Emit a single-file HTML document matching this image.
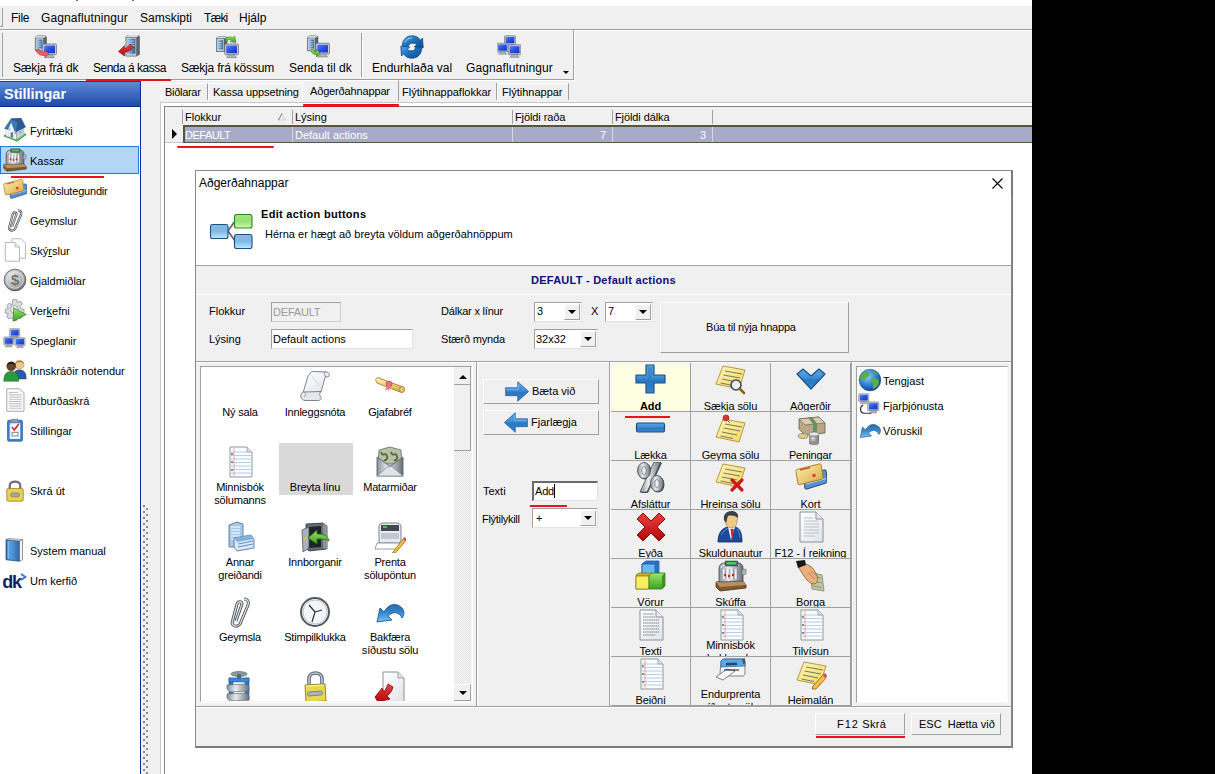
<!DOCTYPE html>
<html><head><meta charset="utf-8">
<style>
*{box-sizing:border-box;margin:0;padding:0}
html,body{width:1215px;height:774px;overflow:hidden;background:#fff;font-family:"Liberation Sans",sans-serif;color:#000}
.a{position:absolute}
.t{position:absolute;white-space:nowrap;font-size:11px;line-height:14px}
.t12{position:absolute;white-space:nowrap;font-size:12px;line-height:14px}
.b{position:absolute;border:1px solid #adadad;background:#e5e5e5}
</style></head><body>
<!-- black right -->
<div class="a" style="left:1032px;top:0;width:183px;height:774px;background:#000"></div>
<div class="a" style="left:76px;top:0;width:2px;height:1px;background:#707080"></div><div class="a" style="left:132px;top:0;width:2px;height:1px;background:#707080"></div>
<!-- top gray area -->
<div class="a" style="left:0;top:6px;width:1032px;height:96px;background:#f0f0f0"></div>
<!-- menu -->
<div class="a" style="left:0;top:29px;width:1032px;height:1px;background:#a0a0a0"></div>
<div class="a" style="left:0;top:30px;width:1032px;height:1px;background:#fff"></div>
<div class="a" style="left:2px;top:8px;width:1px;height:19px;background:#a0a0a0"></div>
<div class="a" style="left:0;top:26px;width:3px;height:1px;background:#a0a0a0"></div>
<div class="t12" style="left:11px;top:11px;letter-spacing:-0.3px">File</div>
<div class="t12" style="left:41px;top:11px;letter-spacing:0.1px">Gagnaflutningur</div>
<div class="t12" style="left:140px;top:11px">Samskipti</div>
<div class="t12" style="left:204px;top:11px;letter-spacing:-0.8px">Tæki</div>
<div class="t12" style="left:239px;top:11px">Hjálp</div>
<!-- toolbar -->
<div class="a" style="left:2px;top:33px;width:1px;height:44px;background:#a0a0a0"></div>
<div class="a" style="left:0;top:79px;width:574px;height:1px;background:#a0a0a0"></div><div class="a" style="left:0;top:80px;width:575px;height:1px;background:#fff"></div>
<div class="a" style="left:573px;top:30px;width:1px;height:50px;background:#a0a0a0"></div><div class="a" style="left:574px;top:30px;width:1px;height:51px;background:#fff"></div>
<div class="a" style="left:361px;top:33px;width:1px;height:44px;background:#a0a0a0"></div>
<div class="a" style="left:362px;top:33px;width:1px;height:44px;background:#fff"></div>
<div class="t12" style="left:13px;top:61px;letter-spacing:-0.18px">Sækja frá dk</div>
<div class="t12" style="left:93px;top:61px;letter-spacing:-0.5px">Senda á kassa</div>
<div class="t12" style="left:181px;top:61px;letter-spacing:-0.19px">Sækja frá kössum</div>
<div class="t12" style="left:289px;top:61px">Senda til dk</div>
<div class="t12" style="left:372px;top:61px">Endurhlaða val</div>
<div class="t12" style="left:466px;top:61px;letter-spacing:0.1px">Gagnaflutningur</div>
<div class="a" style="left:563px;top:71px;width:0;height:0;border-left:3px solid transparent;border-right:3px solid transparent;border-top:3px solid #000"></div>
<div class="a" style="left:86px;top:79px;width:85px;height:2px;background:#e8141c"></div>
<svg width="0" height="0" style="position:absolute">
<defs>
<linearGradient id="gBlue" x1="0" y1="0" x2="0" y2="1"><stop offset="0" stop-color="#2a6aa8"/><stop offset="0.5" stop-color="#3a8ad0"/><stop offset="1" stop-color="#7cc4f4"/></linearGradient>
<linearGradient id="gBlueH" x1="0" y1="0" x2="0" y2="1"><stop offset="0" stop-color="#5aa6e0"/><stop offset="0.45" stop-color="#3d8fd6"/><stop offset="0.55" stop-color="#2a78c0"/><stop offset="1" stop-color="#3a8ad0"/></linearGradient>
<linearGradient id="gBlueD" x1="0" y1="0" x2="1" y2="1"><stop offset="0" stop-color="#4aa8e8"/><stop offset="0.5" stop-color="#1a70c0"/><stop offset="1" stop-color="#0a4a90"/></linearGradient>
<linearGradient id="gBookC" x1="0" y1="0" x2="1" y2="0"><stop offset="0" stop-color="#2a70b8"/><stop offset=".3" stop-color="#5aa0e0"/><stop offset="1" stop-color="#2a68b0"/></linearGradient>
<linearGradient id="gHdrB" x1="0" y1="0" x2="0" y2="1"><stop offset="0" stop-color="#8ab8e0"/><stop offset=".5" stop-color="#80b8e8"/><stop offset="1" stop-color="#c0ecfc"/></linearGradient>
<linearGradient id="gHdrG" x1="0" y1="0" x2="0" y2="1"><stop offset="0" stop-color="#a8e088"/><stop offset=".5" stop-color="#98e070"/><stop offset="1" stop-color="#d0f8b8"/></linearGradient>
<linearGradient id="gNote" x1="0" y1="0" x2="1" y2="1"><stop offset="0" stop-color="#fff6b8"/><stop offset="1" stop-color="#f0d860"/></linearGradient>
<linearGradient id="gPage" x1="0" y1="0" x2="1" y2="1"><stop offset="0" stop-color="#ffffff"/><stop offset="1" stop-color="#dfe4ea"/></linearGradient>
<linearGradient id="gRed" x1="0" y1="0" x2="0" y2="1"><stop offset="0" stop-color="#f04040"/><stop offset="1" stop-color="#b00808"/></linearGradient>
<linearGradient id="gGreen" x1="0" y1="0" x2="0" y2="1"><stop offset="0" stop-color="#9ae86a"/><stop offset="1" stop-color="#3aa020"/></linearGradient>
<linearGradient id="gSilver" x1="0" y1="0" x2="1" y2="0"><stop offset="0" stop-color="#8a9098"/><stop offset="0.4" stop-color="#e8ecf0"/><stop offset="1" stop-color="#6a7078"/></linearGradient>
<linearGradient id="gScreen" x1="0" y1="0" x2="1" y2="1"><stop offset="0" stop-color="#5080f8"/><stop offset="0.5" stop-color="#2a50e8"/><stop offset="1" stop-color="#1030c0"/></linearGradient>
<linearGradient id="gServer" x1="0" y1="0" x2="1" y2="0"><stop offset="0" stop-color="#a8c8e8"/><stop offset="0.6" stop-color="#4a88c8"/><stop offset="1" stop-color="#4a5868"/></linearGradient>
<linearGradient id="gGold" x1="0" y1="0" x2="1" y2="1"><stop offset="0" stop-color="#fff0b0"/><stop offset="1" stop-color="#d8a840"/></linearGradient>
<radialGradient id="gGlobe" cx="0.4" cy="0.35" r="0.7"><stop offset="0" stop-color="#8ad0ff"/><stop offset="0.6" stop-color="#2a78d0"/><stop offset="1" stop-color="#103a90"/></radialGradient>
<radialGradient id="gCoin" cx="0.4" cy="0.35" r="0.7"><stop offset="0" stop-color="#f4f4f4"/><stop offset="0.7" stop-color="#a8a8a8"/><stop offset="1" stop-color="#606060"/></radialGradient>
</defs></svg><svg class="a" style="left:33px;top:35px" width="24" height="24" viewBox="0 0 32 32"><path d="M3 4 C3 2 5 1 7 1 L15 1 C17 1 18 2 18 4 L18 19 L14 21 L3 21 Z" fill="#5a6470" stroke="#3a4450" stroke-width=".6"/>
<path d="M3 4 C3 2 5 1 7 1 L15 1 C17 1 18 2 14 4 Z" fill="#d8dce0"/>
<rect x="3" y="4" width="11" height="17" fill="#c8ccd4" stroke="#4a5460" stroke-width=".6"/>
<rect x="4.5" y="6" width="8" height="12" fill="url(#gServer)"/>
<path d="M5.5 9 h6 M5.5 12 h6 M5.5 15 h6" stroke="#d8ecff" stroke-width=".8"/><g transform="translate(13,12) scale(1.3)"><rect x="0" y="0" width="14" height="11" rx="1" fill="#d0d4d8" stroke="#606870" stroke-width=".8"/>
<rect x="1.5" y="1.5" width="11" height="8" fill="url(#gScreen)"/>
<path d="M4 11 L10 11 L12 14 L2 14 Z" fill="#b0b4b8" stroke="#707880" stroke-width=".6"/></g><path d="M5 19 L11 24 L11 21 L18 21 L18 27 L11 27 L11 24" fill="none"/><path d="M4 20 C6 26 10 28 16 27 L16 30 L21 25 L16 20 L16 23 C12 23 9 22 8 19 Z" fill="#f06060" stroke="#a02020" stroke-width=".7"/></svg><svg class="a" style="left:117px;top:35px" width="24" height="24" viewBox="0 0 32 32"><path d="M12 3 C12 1 14 0 16 0 L27 0 C29 0 30 1 30 3 L30 26 L26 28 L12 28 Z" fill="#5a6470" stroke="#3a4450" stroke-width=".6"/>
<path d="M12 3 C12 1 14 0 16 0 L27 0 C29 0 30 1 26 3 Z" fill="#d8dce0"/>
<rect x="12" y="3" width="14" height="25" fill="#c8ccd4" stroke="#4a5460" stroke-width=".6"/>
<rect x="13.5" y="5" width="11" height="20" fill="url(#gServer)"/>
<path d="M14.5 8 h9 M14.5 11 h9 M14.5 14 h9" stroke="#d8ecff" stroke-width=".8"/><path d="M2 22 L10 14 L10 18 C14 17 16 14 17 12 L22 16 C19 20 15 23 10 23 L10 28 Z" fill="url(#gRed)" stroke="#800808" stroke-width=".7"/></svg><svg class="a" style="left:215px;top:35px" width="24" height="24" viewBox="0 0 32 32"><path d="M2 5 C2 3 4 2 6 2 L13 2 C15 2 16 3 16 5 L16 20 L12 22 L2 22 Z" fill="#5a6470" stroke="#3a4450" stroke-width=".6"/>
<path d="M2 5 C2 3 4 2 6 2 L13 2 C15 2 16 3 12 5 Z" fill="#d8dce0"/>
<rect x="2" y="5" width="10" height="17" fill="#c8ccd4" stroke="#4a5460" stroke-width=".6"/>
<rect x="3.5" y="7" width="7" height="12" fill="url(#gServer)"/>
<path d="M4.5 10 h5 M4.5 13 h5 M4.5 16 h5" stroke="#d8ecff" stroke-width=".8"/><g transform="translate(13,12) scale(1.3)"><rect x="0" y="0" width="14" height="11" rx="1" fill="#d0d4d8" stroke="#606870" stroke-width=".8"/>
<rect x="1.5" y="1.5" width="11" height="8" fill="url(#gScreen)"/>
<path d="M4 11 L10 11 L12 14 L2 14 Z" fill="#b0b4b8" stroke="#707880" stroke-width=".6"/></g><path d="M14 8 C14 2 20 1 24 4 L26 1 L28 10 L20 9 L22 7 C20 5 17 6 16 9 Z" fill="url(#gGreen)" stroke="#2a7010" stroke-width=".6"/></svg><svg class="a" style="left:306px;top:35px" width="24" height="24" viewBox="0 0 32 32"><path d="M2 4 C2 2 4 1 6 1 L13 1 C15 1 16 2 16 4 L16 19 L12 21 L2 21 Z" fill="#5a6470" stroke="#3a4450" stroke-width=".6"/>
<path d="M2 4 C2 2 4 1 6 1 L13 1 C15 1 16 2 12 4 Z" fill="#d8dce0"/>
<rect x="2" y="4" width="10" height="17" fill="#c8ccd4" stroke="#4a5460" stroke-width=".6"/>
<rect x="3.5" y="6" width="7" height="12" fill="url(#gServer)"/>
<path d="M4.5 9 h5 M4.5 12 h5 M4.5 15 h5" stroke="#d8ecff" stroke-width=".8"/><g transform="translate(13,11) scale(1.3)"><rect x="0" y="0" width="14" height="11" rx="1" fill="#d0d4d8" stroke="#606870" stroke-width=".8"/>
<rect x="1.5" y="1.5" width="11" height="8" fill="url(#gScreen)"/>
<path d="M4 11 L10 11 L12 14 L2 14 Z" fill="#b0b4b8" stroke="#707880" stroke-width=".6"/></g><path d="M6 20 C7 24 10 26 14 26 L14 29 L19 24 L14 19 L14 22 C11 22 10 21 9 19 Z" fill="url(#gGreen)" stroke="#2a7010" stroke-width=".7"/></svg><svg class="a" style="left:400px;top:35px" width="24" height="24" viewBox="0 0 32 32"><path d="M3 15 C3 6 9 1 16 1 C21 1 25 3 27 7 L30 4 L31 17 L19 16 L22 13 C21 11 19 11 16 11 C13 11 11.5 13 11.5 15 Z" fill="url(#gBlueD)" stroke="#0c3a70" stroke-width=".9" stroke-linejoin="round"/>
<path d="M29 17 C29 26 23 31 16 31 C11 31 7 29 5 25 L2 28 L1 15 L13 16 L10 19 C11 21 13 21 16 21 C19 21 20.5 19 20.5 17 Z" fill="url(#gBlueD)" stroke="#0c3a70" stroke-width=".9" stroke-linejoin="round"/>
<path d="M6 10 C8 6 12 4 16 4" stroke="#a8d8ff" stroke-width="1.2" fill="none"/></svg><svg class="a" style="left:497px;top:35px" width="24" height="24" viewBox="0 0 32 32"><g transform="translate(10,1) scale(1.05)"><rect x="0" y="0" width="14" height="11" rx="1" fill="#d0d4d8" stroke="#606870" stroke-width=".8"/>
<rect x="1.5" y="1.5" width="11" height="8" fill="url(#gScreen)"/>
<path d="M4 11 L10 11 L12 14 L2 14 Z" fill="#b0b4b8" stroke="#707880" stroke-width=".6"/></g><g transform="translate(0,11) scale(1.05)"><rect x="0" y="0" width="14" height="11" rx="1" fill="#d0d4d8" stroke="#606870" stroke-width=".8"/>
<rect x="1.5" y="1.5" width="11" height="8" fill="url(#gScreen)"/>
<path d="M4 11 L10 11 L12 14 L2 14 Z" fill="#b0b4b8" stroke="#707880" stroke-width=".6"/></g><g transform="translate(15,13) scale(1.2)"><rect x="0" y="0" width="14" height="11" rx="1" fill="#d0d4d8" stroke="#606870" stroke-width=".8"/>
<rect x="1.5" y="1.5" width="11" height="8" fill="url(#gScreen)"/>
<path d="M4 11 L10 11 L12 14 L2 14 Z" fill="#b0b4b8" stroke="#707880" stroke-width=".6"/></g></svg>

<!-- sidebar -->
<div class="a" style="left:0;top:81px;width:140px;height:693px;background:#fff"></div>
<div class="a" style="left:140px;top:81px;width:1px;height:693px;background:#0a2f96"></div>
<div class="a" style="left:0;top:81px;width:140px;height:26px;background:linear-gradient(#5c8ad8,#1e4aa8);border-top:1px solid #1a3c98;border-bottom:1px solid #0a2c90"></div>
<div class="a" style="left:4px;top:87px;font:bold 14.5px/14px 'Liberation Sans',sans-serif;color:#fff;white-space:nowrap">Stillingar</div>
<div class="a" style="left:0;top:146px;width:139px;height:28px;background:#b4d6f6;border:1px solid #1a7ad8"></div>
<div class="t" style="left:30px;top:124px">Fyrirtæki</div>
<div class="t" style="left:30px;top:154px">Kassar</div>
<div class="t" style="left:30px;top:184px;letter-spacing:-0.2px">Greiðslutegundir</div>
<div class="t" style="left:30px;top:214px">Geymslur</div>
<div class="t" style="left:30px;top:244px">Ský<u style="text-decoration-thickness:1px;text-underline-offset:1px">r</u>slur</div>
<div class="t" style="left:30px;top:274px">Gjaldmiðlar</div>
<div class="t" style="left:30px;top:304px">Ver<u style="text-decoration-thickness:1px;text-underline-offset:1px">k</u>efni</div>
<div class="t" style="left:30px;top:334px">Speglanir</div>
<div class="t" style="left:30px;top:364px">Innskráðir notendur</div>
<div class="t" style="left:30px;top:394px">Atburðaskrá</div>
<div class="t" style="left:30px;top:424px">Stillingar</div>
<div class="t" style="left:30px;top:484px">Skrá út</div>
<div class="t" style="left:30px;top:544px">System manual</div>
<div class="t" style="left:30px;top:574px">Um kerfið</div>
<div class="a" style="left:11px;top:176px;width:93px;height:2px;background:#e8141c"></div>
<svg class="a" style="left:3px;top:118px" width="24" height="24" viewBox="0 0 32 32"><path d="M1 24 L19 31 L31 22 L14 16 Z" fill="#48c038" stroke="#208020" stroke-width=".8"/>
<path d="M4 13 L4 24 L18 29 L18 17 Z" fill="#fcfdff" stroke="#8090a0" stroke-width=".5"/>
<path d="M18 17 L18 29 L28 22 L28 12 Z" fill="#c8d0dc" stroke="#8090a0" stroke-width=".5"/>
<path d="M2 14 L11 1 L20 5 L18 18 Z" fill="#3a78b8" stroke="#1a4070" stroke-width=".6"/>
<path d="M11 1 L24 0 L30 12 L18 18 L20 5 Z" fill="#2a5a98" stroke="#1a4070" stroke-width=".6"/>
<path d="M7 15 L11 6 L15 17 L15 27 L7 24 Z" fill="#fcfdff" stroke="#8090a0" stroke-width=".4"/>
<rect x="10" y="19" width="3.5" height="7" fill="#707c88"/><rect x="8" y="14" width="2" height="3" fill="#80b0e0"/><rect x="15.5" y="18" width="2" height="3.5" fill="#80b0e0"/><rect x="22" y="17" width="2.5" height="3.5" fill="#80b0e0"/></svg><svg class="a" style="left:3px;top:148px" width="24" height="24" viewBox="0 0 32 32"><path d="M1 22 L27 20 L31 25 L31 28 L5 31 L1 27 Z" fill="#7a5a30" stroke="#4a3018" stroke-width=".8"/>
<path d="M1 22 L27 20 L31 25 L5 27 Z" fill="#b89060"/>
<path d="M4 22 L4 9 C4 5 6 3 10 3 L23 3 C26 3 28 5 28 8 L28 21 Z" fill="url(#gSilver)" stroke="#404850" stroke-width=".8"/>
<path d="M6 8 C6 6 8 5 10 5 L24 5" stroke="#f4f4f4" stroke-width="1" fill="none"/>
<rect x="10" y="1" width="13" height="5" rx="1" fill="#505860" stroke="#303840" stroke-width=".5"/><rect x="11.5" y="2" width="10" height="2.5" fill="#40d050"/>
<path d="M9 9 V19 M13 9 V19 M17 9 V19 M21 9 V19" stroke="#f8f8f8" stroke-width="1.8"/>
<path d="M10.2 9 V19 M14.2 9 V19 M18.2 9 V19 M22.2 9 V19" stroke="#606870" stroke-width=".6"/>
<path d="M27 10 L31 9 L31 14 L27 15 Z" fill="#b0b8c0" stroke="#505860" stroke-width=".5"/>
<circle cx="10" cy="15" r="1.2" fill="#d02020"/><circle cx="14" cy="16" r="1.2" fill="#d02020"/><circle cx="18" cy="15" r="1.2" fill="#d02020"/></svg><svg class="a" style="left:3px;top:178px" width="24" height="24" viewBox="0 0 32 32"><path d="M10 13 L29 8 C30.5 7.6 31 8 31.3 9.5 L32 19 C32 20.5 31.5 21 30 21.4 L12 27 C10.5 27.4 10 27 9.6 25.6 Z" fill="#5a90d0" stroke="#1a4070" stroke-width=".9"/>
<path d="M11 22 L31 16.5" stroke="#c8e0f8" stroke-width="1"/>
<path d="M2 7.5 L24 2 C25.5 1.6 26 2 26.3 3.4 L28 15 C28.2 16.4 27.8 17 26.5 17.3 L5 22.5 C3.6 22.8 3 22.4 2.8 21 L1 9.5 C0.8 8.2 1 7.8 2 7.5 Z" fill="url(#gGold)" stroke="#a07820" stroke-width=".9"/>
<path d="M5 8 L15 5.5" stroke="#d05030" stroke-width="1.3"/><path d="M5 11 L20 7" stroke="#f0d890" stroke-width=".8"/>
<circle cx="19" cy="13.5" r="1.8" fill="#e04030"/></svg><svg class="a" style="left:3px;top:208px" width="24" height="24" viewBox="0 0 32 32"><path d="M20 3 C24 3 25 6 24 9 L16 28 C14 31 9 31 8 27 L13 8 C14 5 18 5 18 8 L12 25" fill="none" stroke="#4a5058" stroke-width="3"/>
<path d="M20 3 C24 3 25 6 24 9 L16 28 C14 31 9 31 8 27 L13 8 C14 5 18 5 18 8 L12 25" fill="none" stroke="#d8dce0" stroke-width="1.3"/></svg><svg class="a" style="left:3px;top:238px" width="24" height="24" viewBox="0 0 32 32"><path d="M12 1 H24 L30 7 V27 H12 Z" fill="#fff" stroke="#909aa4" stroke-width=".9"/>
<path d="M3 6 H16 L22 12 V31 H3 Z" fill="#fff" stroke="#909aa4" stroke-width=".9"/>
<path d="M16 6 V12 H22" fill="#e8ecf0" stroke="#909aa4" stroke-width=".8"/></svg><svg class="a" style="left:3px;top:268px" width="24" height="24" viewBox="0 0 32 32"><circle cx="16" cy="16" r="14.5" fill="url(#gCoin)" stroke="#505050" stroke-width="1"/>
<circle cx="16" cy="16" r="11" fill="none" stroke="#e8e8e8" stroke-width="1"/>
<text x="16" y="23" text-anchor="middle" font-family="Liberation Sans" font-weight="bold" font-size="20" fill="#707070">$</text></svg><svg class="a" style="left:3px;top:298px" width="24" height="24" viewBox="0 0 32 32"><path d="M13 2 h5 l1 4 l4 -2 l3 4 l-3 3 l1 4 h4 v5 l-4 1 l2 4 l-3 3 l-4 -2 l-1 4 h-5 l-1 -4 l-4 2 l-3 -3 l2 -4 l-4 -1 v-5 l4 -1 l-2 -4 l3 -3 l4 2 Z" fill="#d8dce0" stroke="#707880" stroke-width=".8"/>
<circle cx="15" cy="15" r="5" fill="#f4f4f4" stroke="#707880" stroke-width=".8"/>
<path d="M14 13 L31 22 L14 31 Z" fill="url(#gGreen)" stroke="#2a7010" stroke-width=".8"/></svg><svg class="a" style="left:3px;top:328px" width="24" height="24" viewBox="0 0 32 32"><g transform="translate(9,1) scale(0.95)"><rect x="0" y="0" width="14" height="11" rx="1" fill="#d0d4d8" stroke="#606870" stroke-width=".8"/>
<rect x="1.5" y="1.5" width="11" height="8" fill="url(#gScreen)"/>
<path d="M4 11 L10 11 L12 14 L2 14 Z" fill="#b0b4b8" stroke="#707880" stroke-width=".6"/></g><g transform="translate(1,12) scale(0.95)"><rect x="0" y="0" width="14" height="11" rx="1" fill="#d0d4d8" stroke="#606870" stroke-width=".8"/>
<rect x="1.5" y="1.5" width="11" height="8" fill="url(#gScreen)"/>
<path d="M4 11 L10 11 L12 14 L2 14 Z" fill="#b0b4b8" stroke="#707880" stroke-width=".6"/></g><g transform="translate(16,13) scale(0.95)"><rect x="0" y="0" width="14" height="11" rx="1" fill="#d0d4d8" stroke="#606870" stroke-width=".8"/>
<rect x="1.5" y="1.5" width="11" height="8" fill="url(#gScreen)"/>
<path d="M4 11 L10 11 L12 14 L2 14 Z" fill="#b0b4b8" stroke="#707880" stroke-width=".6"/></g></svg><svg class="a" style="left:3px;top:358px" width="24" height="24" viewBox="0 0 32 32"><circle cx="22" cy="9" r="6" fill="#f0c890" stroke="#a07040" stroke-width=".6"/><path d="M16 8 C16 2 28 2 28 8 C26 5 18 5 16 8Z" fill="#b08040"/>
<path d="M13 28 C13 18 17 16 22 16 C28 16 31 19 31 28 Z" fill="#2a5aa8" stroke="#1a3a70" stroke-width=".6"/>
<circle cx="11" cy="11" r="6" fill="#6a4028" stroke="#402010" stroke-width=".6"/><path d="M5 10 C5 4 17 4 17 10 C15 7 7 7 5 10Z" fill="#101010"/>
<path d="M1 31 C1 21 5 18 11 18 C17 18 21 21 21 31 Z" fill="#2a9a40" stroke="#106020" stroke-width=".6"/></svg><svg class="a" style="left:3px;top:388px" width="24" height="24" viewBox="0 0 32 32"><path d="M5 1 H22 L28 7 V31 H5 Z" fill="#fafafa" stroke="#8a9098" stroke-width="1"/>
<path d="M8 6h12 M8 9h17 M8 12h17 M8 15h17 M8 18h17 M8 21h17 M8 24h17 M8 27h17" stroke="#a0a4a8" stroke-width=".9"/></svg><svg class="a" style="left:3px;top:418px" width="24" height="24" viewBox="0 0 32 32"><rect x="6" y="3" width="20" height="28" rx="2" fill="#3a80d0" stroke="#1a4a90" stroke-width=".8"/>
<rect x="9" y="7" width="14" height="21" fill="#f4f8fc"/>
<rect x="11" y="1" width="10" height="5" rx="1" fill="#8898a8"/>
<path d="M12 12 L15 16 L21 8" fill="none" stroke="#d02020" stroke-width="1.8"/>
<rect x="12" y="19" width="8" height="5" fill="none" stroke="#606870" stroke-width="1"/></svg><svg class="a" style="left:3px;top:478px" width="24" height="24" viewBox="0 0 32 32"><path d="M9 15 V10 C9 3 23 3 23 10 V15" fill="none" stroke="#6a7078" stroke-width="3"/>
<rect x="5" y="14" width="22" height="17" rx="2" fill="#e8d050" stroke="#8a7010" stroke-width=".9"/>
<rect x="10" y="20" width="12" height="5" rx="2.5" fill="#a0a8b0" stroke="#505860" stroke-width=".6"/></svg><svg class="a" style="left:3px;top:538px" width="24" height="24" viewBox="0 0 32 32"><path d="M4 2 L22 4 L22 31 L4 29 Z" fill="url(#gBookC)" stroke="#103a70" stroke-width=".9"/>
<path d="M22 4 L26 2 L26 29 L22 31 Z" fill="#f4f4f4" stroke="#505860" stroke-width=".8"/>
<path d="M4 2 L8 0.5 L26 2 L22 4 Z" fill="#d8e0e8" stroke="#505860" stroke-width=".6"/>
<path d="M7 4 L7 28" stroke="#8ac0f0" stroke-width="1.5"/></svg><svg class="a" style="left:3px;top:568px" width="24" height="24" viewBox="0 0 32 32"><text x="-1" y="26" font-family="Liberation Sans" font-weight="bold" font-size="24" fill="#141c64" letter-spacing="-1.5">dk</text>
<path d="M24 8 L30 12 L24 16" fill="none" stroke="#3a6ae0" stroke-width="2.4"/></svg>

<!-- splitter -->
<div class="a" style="left:141px;top:102px;width:19px;height:672px;background:#f0f0f0"></div>
<div class="a" style="left:143px;top:505px;width:5px;height:269px;background-image:linear-gradient(#8c8c8c 2px,transparent 2px),linear-gradient(#8c8c8c 2px,transparent 2px);background-size:2px 6px,2px 6px;background-repeat:repeat-y,repeat-y;background-position:0 0,3px 3px"></div>

<!-- tabs -->
<!-- tabs -->
<div class="a" style="left:161px;top:83px;width:47px;height:17px;background:#f0f0f0;border-left:1px solid #fff;border-top:1px solid #fff;border-right:1px solid #a0a0a0"></div>
<div class="t" style="left:165px;top:85px;letter-spacing:-0.3px">Biðlarar</div>
<div class="a" style="left:208px;top:83px;width:94px;height:17px;background:#f0f0f0;border-left:1px solid #fff;border-top:1px solid #fff"></div>
<div class="t" style="left:213px;top:85px;letter-spacing:-0.1px">Kassa uppsetning</div>
<div class="a" style="left:302px;top:80px;width:97px;height:21px;background:#f0f0f0;border-left:1px solid #fff;border-top:1px solid #fff;border-right:1px solid #a0a0a0"></div>
<div class="t" style="left:310px;top:84px;letter-spacing:-0.15px">Aðgerðahnappar</div>
<div class="a" style="left:399px;top:83px;width:98px;height:17px;background:#f0f0f0;border-right:1px solid #a0a0a0"></div>
<div class="t" style="left:402px;top:85px;letter-spacing:0px">Flýtihnappaflokkar</div>
<div class="a" style="left:497px;top:83px;width:72px;height:17px;background:#f0f0f0;border-left:1px solid #fff;border-top:1px solid #fff;border-right:1px solid #a0a0a0"></div>
<div class="t" style="left:502px;top:85px;letter-spacing:0px">Flýtihnappar</div>


<!-- tab page -->
<div class="a" style="left:160px;top:102px;width:872px;height:672px;background:#fff;border-left:1px solid #c8c8c8;border-top:1px solid #c8c8c8"></div>
<div class="a" style="left:164px;top:106px;width:868px;height:668px;background:#fff;border-left:1px solid #828282;border-top:1px solid #828282"></div>
<!-- grid -->
<div class="a" style="left:165px;top:107px;width:867px;height:18px;background:#f0f0f0"></div>
<div class="a" style="left:182px;top:110px;width:1px;height:14px;background:#a0a0a0"></div>
<div class="a" style="left:292px;top:110px;width:1px;height:14px;background:#a0a0a0"></div>
<div class="a" style="left:512px;top:110px;width:1px;height:14px;background:#a0a0a0"></div>
<div class="a" style="left:612px;top:110px;width:1px;height:14px;background:#a0a0a0"></div>
<div class="a" style="left:712px;top:110px;width:1px;height:14px;background:#a0a0a0"></div>
<div class="t" style="left:185px;top:110px">Flokkur</div>
<div class="t" style="left:295px;top:110px">Lýsing</div>
<div class="t" style="left:515px;top:110px;letter-spacing:-0.1px">Fjöldi raða</div>
<div class="t" style="left:615px;top:110px;letter-spacing:-0.1px">Fjöldi dálka</div>
<svg class="a" style="left:277px;top:112px" width="10" height="9"><path d="M1.5 8 L5 1.5 L8.5 8 Z" fill="none" stroke="#d0d0d0" stroke-width="1"/><path d="M1.5 8 L5 1.5" stroke="#808080" stroke-width="1"/></svg>
<div class="a" style="left:165px;top:125px;width:18px;height:18px;background:#f0f0f0;border-bottom:1px solid #c8c8c8"></div>
<div class="a" style="left:172px;top:129px;width:0;height:0;border-top:5px solid transparent;border-bottom:5px solid transparent;border-left:5px solid #000"></div>
<div class="a" style="left:183px;top:125px;width:849px;height:18px;background:#a7abc8;border-top:2px solid #5a5440;border-bottom:1px solid #5a5440"></div>
<div class="a" style="left:183px;top:125px;width:2px;height:18px;background:#5a5440"></div>
<div class="a" style="left:292px;top:127px;width:1px;height:15px;background:#d8d8e0"></div>
<div class="a" style="left:512px;top:127px;width:1px;height:15px;background:#d8d8e0"></div>
<div class="a" style="left:612px;top:127px;width:1px;height:15px;background:#d8d8e0"></div>
<div class="a" style="left:712px;top:127px;width:1px;height:15px;background:#d8d8e0"></div>
<div class="t" style="left:185px;top:128px;color:#fff;letter-spacing:-0.5px">DEFAULT</div>
<div class="t" style="left:295px;top:128px;color:#fff">Default actions</div>
<div class="t" style="left:600px;top:128px;color:#fff">7</div>
<div class="t" style="left:700px;top:128px;color:#fff">3</div>
<div class="a" style="left:177px;top:146px;width:97px;height:2px;background:#e8141c;border-radius:1px"></div>


<div class="a" style="left:303px;top:104px;width:96px;height:3px;background:#e8141c;border-radius:1px"></div>
<!-- dialog -->
<!-- dialog -->
<div class="a" style="left:195px;top:170px;width:818px;height:578px;background:#f0f0f0;border-left:1px solid #8a8a8a;border-top:1px solid #8a8a8a;border-right:2px solid #7a7a7a;border-bottom:2px solid #7a7a7a"></div>
<div class="a" style="left:196px;top:171px;width:815px;height:94px;background:#fff"></div>
<div class="a" style="left:1011px;top:196px;width:1px;height:551px;background:#8a8a8a"></div>
<div class="t12" style="left:199px;top:176px">Aðgerðahnappar</div>
<svg class="a" style="left:991px;top:177px" width="13" height="13"><path d="M1.5 1.5 L11.5 11.5 M11.5 1.5 L1.5 11.5" stroke="#000" stroke-width="1.1"/></svg>
<svg class="a" style="left:210px;top:214px" width="43" height="35" viewBox="0 0 43 35"><path d="M18 17 L25 7 M18 17 L25 27" stroke="#6a6a6a" stroke-width="1.8" fill="none"/>
<rect x="0.5" y="10.5" width="17.5" height="14" rx="2" fill="url(#gHdrB)" stroke="#1a5088" stroke-width="1.1"/>
<rect x="24.5" y="0.5" width="17.5" height="13.5" rx="2" fill="url(#gHdrG)" stroke="#2a8a18" stroke-width="1.1"/>
<rect x="24.5" y="20.5" width="17.5" height="14" rx="2" fill="url(#gHdrB)" stroke="#1a5088" stroke-width="1.1"/></svg>
<div class="t" style="left:261px;top:207px;font-weight:bold;letter-spacing:0.3px">Edit action buttons</div>
<div class="t" style="left:265px;top:227px">Hérna er hægt að breyta völdum aðgerðahnöppum</div>
<div class="a" style="left:196px;top:265px;width:815px;height:1px;background:#a0a0a0"></div>
<div class="t" style="left:531px;top:273px;font-weight:bold;color:#0c0c80;letter-spacing:0.25px">DEFAULT - Default actions</div>
<div class="a" style="left:196px;top:294px;width:815px;height:1px;background:#fff"></div>
<!-- form -->
<div class="t" style="left:209px;top:304px">Flokkur</div>
<div class="t" style="left:209px;top:332px">Lýsing</div>
<div class="a" style="left:271px;top:302px;width:70px;height:20px;background:#f0f0f0;border:1px solid #cfcfcf;border-left-color:#a0a0a0;border-top-color:#a0a0a0"></div>
<div class="t" style="left:273px;top:305px;color:#9a9a9a;letter-spacing:-0.2px">DEFAULT</div>
<div class="a" style="left:271px;top:329px;width:142px;height:20px;background:#fff;border:1px solid #e3e3e3;border-left-color:#a0a0a0;border-top-color:#a0a0a0"></div>
<div class="t" style="left:273px;top:332px">Default actions</div>
<div class="t" style="left:441px;top:304px;letter-spacing:-0.2px">Dálkar x línur</div>
<div class="t" style="left:441px;top:332px;letter-spacing:-0.2px">Stærð mynda</div>
<div class="a" style="left:534px;top:302px;width:48px;height:20px;background:#fff;border:1px solid #e3e3e3;border-left-color:#a0a0a0;border-top-color:#a0a0a0"></div>
<div class="a" style="left:564px;top:304px;width:16px;height:16px;background:#f0f0f0;border-right:1px solid #a0a0a0;border-bottom:1px solid #a0a0a0;border-left:1px solid #fff;border-top:1px solid #fff"></div>
<div class="a" style="left:568px;top:310px;width:0;height:0;border-left:4px solid transparent;border-right:4px solid transparent;border-top:4px solid #000"></div>
<div class="t" style="left:537px;top:304px">3</div>
<div class="t" style="left:591px;top:304px">X</div>
<div class="a" style="left:605px;top:302px;width:48px;height:20px;background:#fff;border:1px solid #e3e3e3;border-left-color:#a0a0a0;border-top-color:#a0a0a0"></div>
<div class="a" style="left:635px;top:304px;width:16px;height:16px;background:#f0f0f0;border-right:1px solid #a0a0a0;border-bottom:1px solid #a0a0a0;border-left:1px solid #fff;border-top:1px solid #fff"></div>
<div class="a" style="left:639px;top:310px;width:0;height:0;border-left:4px solid transparent;border-right:4px solid transparent;border-top:4px solid #000"></div>
<div class="t" style="left:608px;top:304px">7</div>
<div class="a" style="left:534px;top:329px;width:64px;height:20px;background:#fff;border:1px solid #e3e3e3;border-left-color:#a0a0a0;border-top-color:#a0a0a0"></div>
<div class="a" style="left:580px;top:331px;width:16px;height:16px;background:#f0f0f0;border-right:1px solid #a0a0a0;border-bottom:1px solid #a0a0a0;border-left:1px solid #fff;border-top:1px solid #fff"></div>
<div class="a" style="left:584px;top:337px;width:0;height:0;border-left:4px solid transparent;border-right:4px solid transparent;border-top:4px solid #000"></div>
<div class="t" style="left:536px;top:332px">32x32</div>
<div class="a" style="left:660px;top:302px;width:189px;height:51px;background:#f0f0f0;border:1px solid #a0a0a0;border-left-color:#fff;border-top-color:#fff"></div>
<div class="t" style="left:706px;top:320px;letter-spacing:-0.2px">Búa til nýja hnappa</div>
<div class="a" style="left:196px;top:361px;width:815px;height:1px;background:#a0a0a0"></div>
<div class="a" style="left:196px;top:362px;width:815px;height:1px;background:#fff"></div>
<!-- left list -->
<div class="a" style="left:200px;top:366px;width:272px;height:336px;background:#fff;border:1px solid #f4f4f4;border-left-color:#a0a0a0;border-top-color:#a0a0a0"></div><div class="a" style="left:200px;top:702px;width:273px;height:1px;background:#fff"></div><div class="a" style="left:472px;top:366px;width:1px;height:337px;background:#fff"></div>
<div class="a" style="left:454px;top:367px;width:17px;height:334px;background-color:#f4f4f4;background-image:linear-gradient(45deg,#e6e6e6 25%,transparent 25%,transparent 75%,#e6e6e6 75%),linear-gradient(45deg,#e6e6e6 25%,transparent 25%,transparent 75%,#e6e6e6 75%);background-size:2px 2px;background-position:0 0,1px 1px"></div>
<div class="a" style="left:454px;top:367px;width:17px;height:18px;background:#f0f0f0;border-bottom:1px solid #a0a0a0;border-right:1px solid #a0a0a0"></div>
<div class="a" style="left:459px;top:375px;width:0;height:0;border-left:4px solid transparent;border-right:4px solid transparent;border-bottom:4px solid #000"></div>
<div class="a" style="left:454px;top:385px;width:17px;height:66px;background:#f0f0f0;border-bottom:1px solid #a0a0a0;border-right:1px solid #a0a0a0"></div>
<div class="a" style="left:454px;top:684px;width:17px;height:17px;background:#f0f0f0;border-top:1px solid #fff;border-bottom:1px solid #a0a0a0;border-right:1px solid #a0a0a0"></div>
<div class="a" style="left:459px;top:691px;width:0;height:0;border-left:4px solid transparent;border-right:4px solid transparent;border-top:4px solid #000"></div>
<div class="a" style="left:279px;top:443px;width:74px;height:52px;background:#d9d9d9"></div>
<div class="a" style="left:201px;top:367px;width:253px;height:334px;overflow:hidden"><div class="a" style="left:-1px;top:39px;width:80px;text-align:center;font-size:11px;line-height:13px;letter-spacing:-0.2px">Ný sala</div><svg class="a" style="left:98px;top:4px" width="32" height="32" viewBox="0 0 32 32"><path d="M11 3 C11 1 13 0.5 15 0.5 L27 1 C30 1 31 3 30 5 C29 6.5 27 6.5 26.5 5 L22 21 L4 22 L9 5 C9.5 3.5 10.5 3 11 3Z" fill="url(#gPage)" stroke="#707880" stroke-width=".9"/>
<path d="M27 1 C25 1 24.5 3 26.5 5" fill="none" stroke="#707880" stroke-width=".8"/>
<path d="M2 26 C1 23 3 21 5 21 L22 20.5 C20 22 20.5 25 22 26.5 C23 28 21 29.5 19 29.5 L6 29.5 C4 29.5 2.5 28 2 26Z" fill="#e4e8ec" stroke="#707880" stroke-width=".9"/>
<path d="M5 21 C7 22 7 25 5 26" fill="none" stroke="#909aa4" stroke-width=".8"/>
<path d="M12 4 L23 18" stroke="#c8d8e8" stroke-width="1"/></svg><div class="a" style="left:74px;top:39px;width:80px;text-align:center;font-size:11px;line-height:13px;letter-spacing:-0.2px">Innleggsnóta</div><svg class="a" style="left:173px;top:4px" width="32" height="32" viewBox="0 0 32 32"><path d="M2 10 C1 8 3 6 5 7 L29 16 C31 17 31 20 29 21 L26 21 L3 12 Z" fill="url(#gGold)" stroke="#a08030" stroke-width=".9"/>
<ellipse cx="28" cy="18.5" rx="2.5" ry="3" fill="#e8c878" stroke="#a08030" stroke-width=".8"/>
<circle cx="15" cy="13" r="3" fill="#e87080" stroke="#b04050" stroke-width=".6"/>
<path d="M13 15 L11 20 L14 18 L15 21 L16 15Z" fill="#e87080"/></svg><div class="a" style="left:149px;top:39px;width:80px;text-align:center;font-size:11px;line-height:13px;letter-spacing:-0.2px">Gjafabréf</div><svg class="a" style="left:23px;top:79px" width="32" height="32" viewBox="0 0 32 32"><path d="M6 1 H23 L28 6 V31 H6 Z" fill="#fbfcfe" stroke="#9098a0" stroke-width="1"/>
<path d="M23 1 V6 H28" fill="#e0e4e8" stroke="#9098a0" stroke-width=".8"/>
<path d="M7 6h20 M7 9.5h20 M7 13h20 M7 16.5h20 M7 20h20 M7 23.5h20 M7 27h20" stroke="#a8c0e0" stroke-width=".8"/>
<path d="M10 2 V30" stroke="#e89090" stroke-width=".8"/>
<circle cx="8" cy="8" r=".9" fill="#606060"/><circle cx="8" cy="16" r=".9" fill="#606060"/><circle cx="8" cy="24" r=".9" fill="#606060"/></svg><div class="a" style="left:-1px;top:114px;width:80px;text-align:center;font-size:11px;line-height:13px;letter-spacing:-0.2px">Minnisbók<br>sölumanns</div><div class="a" style="left:74px;top:114px;width:80px;text-align:center;font-size:11px;line-height:13px;letter-spacing:-0.2px">Breyta línu</div><svg class="a" style="left:173px;top:79px" width="32" height="32" viewBox="0 0 32 32"><path d="M5 4 L16 1 L27 4 L28 18 L4 18 Z" fill="#b8c0a8" stroke="#505850" stroke-width=".7"/>
<path d="M7 6 C9 12 11 5 13 10 C14 13 12 15 10 14 M17 6 C19 12 21 5 23 10 C24 13 22 15 20 14" stroke="#4a6a38" stroke-width="1.8" fill="none"/>
<path d="M3 11 L16 20 L29 11 L29 30 L3 30 Z" fill="url(#gSilver)" stroke="#505860" stroke-width=".8"/>
<path d="M3 30 L16 19 L29 30 Z" fill="#e0e4e8" stroke="#707880" stroke-width=".6"/>
<path d="M3 11 L16 21 L29 11" fill="none" stroke="#808890" stroke-width=".7"/></svg><div class="a" style="left:149px;top:114px;width:80px;text-align:center;font-size:11px;line-height:13px;letter-spacing:-0.2px">Matarmiðar</div><svg class="a" style="left:23px;top:154px" width="32" height="32" viewBox="0 0 32 32"><path d="M5 4 L13 1 L19 3 L19 26 L5 26 Z" fill="#a8c8e8" stroke="#4a6890" stroke-width=".8"/>
<path d="M7 6h9 M7 9h9 M7 12h9 M7 15h9 M7 18h9" stroke="#fff" stroke-width="1.2"/>
<path d="M10 17 L27 14 L30 18 L30 27 L13 30 L10 26 Z" fill="#d8e8f8" stroke="#4a6890" stroke-width=".8"/>
<path d="M10 17 L27 14 L30 18 L13 21 Z" fill="#80b0e0"/>
<path d="M14 23 L29 20 M14 26 L29 23" stroke="#6090c0" stroke-width="1"/></svg><div class="a" style="left:-1px;top:189px;width:80px;text-align:center;font-size:11px;line-height:13px;letter-spacing:-0.2px">Annar<br>greiðandi</div><svg class="a" style="left:98px;top:154px" width="32" height="32" viewBox="0 0 32 32"><path d="M7 3 L24 2 L28 5 L28 28 L10 30 L7 27 Z" fill="#606a74" stroke="#30383e" stroke-width=".8"/>
<path d="M24 2 L28 5 L28 28 L24 27 Z" fill="#8a949e"/>
<path d="M10 6 L22 5 L22 26 L10 27 Z" fill="#202428"/>
<path d="M10 6 L3 9 L4 31 L10 27 Z" fill="#a8b2bc" stroke="#40484e" stroke-width=".7"/>
<circle cx="6" cy="18" r="1.5" fill="#e0c040"/>
<path d="M9 17 L18 9 L18 13 C24 13 29 14 30 20 C27 18 24 18 18 18 L18 23 Z" fill="url(#gGreen)" stroke="#2a7010" stroke-width=".8"/></svg><div class="a" style="left:74px;top:189px;width:80px;text-align:center;font-size:11px;line-height:13px;letter-spacing:-0.2px">Innborganir</div><svg class="a" style="left:173px;top:154px" width="32" height="32" viewBox="0 0 32 32"><path d="M5 6 C5 3 7 2 10 2 L22 2 C25 2 27 3 27 6 L27 22 L5 22 Z" fill="#e8ecf0" stroke="#606870" stroke-width=".8"/>
<rect x="7" y="4" width="18" height="6" fill="#404850"/><rect x="9" y="5" width="4" height="2" fill="#40c040"/>
<path d="M7 12 h18 v6 h-18z" fill="#c0c8d0"/>
<path d="M3 22 L26 22 L24 28 L1 28 Z" fill="#fff" stroke="#808890" stroke-width=".8"/>
<path d="M19 31 L29 18 L31.5 20 L21.5 32 L18.5 32 Z" fill="#f0c040" stroke="#906010" stroke-width=".7"/><path d="M29 18 L30.5 16 L33 18 L31.5 20Z" fill="#e04050"/></svg><div class="a" style="left:149px;top:189px;width:80px;text-align:center;font-size:11px;line-height:13px;letter-spacing:-0.2px">Prenta<br>sölupöntun</div><svg class="a" style="left:23px;top:229px" width="32" height="32" viewBox="0 0 32 32"><path d="M20 3 C24 3 25 6 24 9 L16 28 C14 31 9 31 8 27 L13 8 C14 5 18 5 18 8 L12 25" fill="none" stroke="#4a5058" stroke-width="3"/>
<path d="M20 3 C24 3 25 6 24 9 L16 28 C14 31 9 31 8 27 L13 8 C14 5 18 5 18 8 L12 25" fill="none" stroke="#d8dce0" stroke-width="1.3"/></svg><div class="a" style="left:-1px;top:264px;width:80px;text-align:center;font-size:11px;line-height:13px;letter-spacing:-0.2px">Geymsla</div><svg class="a" style="left:98px;top:229px" width="32" height="32" viewBox="0 0 32 32"><circle cx="16" cy="16" r="14" fill="#f4f6f8" stroke="#505860" stroke-width="2"/>
<circle cx="16" cy="16" r="12" fill="none" stroke="#b0b8c0" stroke-width=".8"/>
<path d="M16 16 L10 9 M16 16 L23 14 M16 16 L13 26" stroke="#303030" stroke-width="1.2"/></svg><div class="a" style="left:74px;top:264px;width:80px;text-align:center;font-size:11px;line-height:13px;letter-spacing:-0.2px">Stimpilklukka</div><svg class="a" style="left:173px;top:229px" width="32" height="32" viewBox="0 0 32 32"><path d="M3 26 L6 12 L10 16 C14 8 22 6 28 12 C31 15 30 20 28 22 C26 17 20 14 14 20 L18 24 Z" fill="url(#gBlue)" stroke="#1a5a98" stroke-width=".9" stroke-linejoin="round"/></svg><div class="a" style="left:149px;top:264px;width:80px;text-align:center;font-size:11px;line-height:13px;letter-spacing:-0.2px">Bakfæra<br>síðustu sölu</div><svg class="a" style="left:23px;top:304px" width="32" height="32" viewBox="0 0 32 32"><ellipse cx="15" cy="3" rx="8" ry="2.5" fill="#8898a8" stroke="#505860" stroke-width=".6"/>
<rect x="13" y="3" width="4" height="5" fill="#606870"/>
<rect x="5" y="7" width="4" height="22" fill="#2a78d0" stroke="#104880" stroke-width=".5"/><rect x="21" y="7" width="4" height="22" fill="#2a78d0" stroke="#104880" stroke-width=".5"/>
<rect x="5" y="7" width="20" height="4" fill="#3a88d8" stroke="#104880" stroke-width=".5"/>
<path d="M3 14 L22 13 L25 16 L25 20 L6 21 L3 18 Z" fill="url(#gSilver)" stroke="#606870" stroke-width=".7"/>
<path d="M3 23 L22 22 L25 25 L25 29 L6 30 L3 27 Z" fill="url(#gSilver)" stroke="#606870" stroke-width=".7"/></svg><svg class="a" style="left:98px;top:304px" width="32" height="32" viewBox="0 0 32 32"><path d="M10 15 V8 C10 0 23 0 23 8 V15" fill="none" stroke="#5a6878" stroke-width="3.6"/>
<path d="M10 15 V8 C10 0 23 0 23 8 V15" fill="none" stroke="#b8c8d8" stroke-width="1.6"/>
<path d="M6 14 L26 13 L27 30 L7 31 Z" fill="#e8d850" stroke="#8a7818" stroke-width=".9"/>
<path d="M7 15 L25 14" stroke="#fff8b0" stroke-width="1.2"/>
<path d="M10 21 L22 20 C24 20 24 24 22 24 L10 25 C8 25 8 21 10 21Z" fill="#a8b4c0" stroke="#505860" stroke-width=".6"/></svg><svg class="a" style="left:173px;top:304px" width="32" height="32" viewBox="0 0 32 32"><path d="M9 1 H24 L30 7 V31 H9 Z" fill="url(#gPage)" stroke="#8a9098" stroke-width="1"/>
<path d="M24 1 V7 H30" fill="#e0e4e8" stroke="#8a9098" stroke-width=".8"/>
<path d="M1 26 L8 17 L10 21 C12 18 13 15 14 13 L19 16 C18 20 16 23 13 25 L16 28 L4 31 Z" fill="url(#gRed)" stroke="#800808" stroke-width=".8" stroke-linejoin="round"/></svg></div>
<div class="a" style="left:476px;top:361px;width:1px;height:345px;background:#a0a0a0"></div>
<div class="a" style="left:477px;top:362px;width:1px;height:344px;background:#fff"></div>
<!-- middle -->
<div class="a" style="left:483px;top:379px;width:116px;height:25px;background:#f0f0f0;border:1px solid #a0a0a0;border-left-color:#fff;border-top-color:#fff"></div>
<div class="t" style="left:532px;top:384px">Bæta við</div>
<div class="a" style="left:483px;top:410px;width:116px;height:25px;background:#f0f0f0;border:1px solid #a0a0a0;border-left-color:#fff;border-top-color:#fff"></div>
<div class="t" style="left:531px;top:415px">Fjarlægja</div>
<svg class="a" style="left:505px;top:381px" width="24" height="24" viewBox="0 0 32 32"><path d="M0.8 9 H17 V1 L31.5 14 L17 27 V19.5 H0.8 Z" fill="url(#gBlueH)" stroke="#2a5aa0" stroke-width="1" stroke-linejoin="round"/>
<path d="M2 11 H18 V4" stroke="#a0d0ff" stroke-width="1" fill="none" opacity=".7"/></svg><svg class="a" style="left:504px;top:412px" width="24" height="24" viewBox="0 0 32 32"><path d="M31.2 9 H15 V1 L0.5 14 L15 27 V19.5 H31.2 Z" fill="url(#gBlueH)" stroke="#2a5aa0" stroke-width="1" stroke-linejoin="round"/>
<path d="M30 11 H14 V4" stroke="#a0d0ff" stroke-width="1" fill="none" opacity=".7"/></svg>
<div class="t" style="left:483px;top:484px">Texti</div>
<div class="a" style="left:532px;top:481px;width:66px;height:20px;background:#fff;border:1px solid #e3e3e3;border-left:2px solid #6a6a6a;border-top:2px solid #6a6a6a"></div>
<div class="t" style="left:535px;top:484px;letter-spacing:-0.2px">Add</div>
<div class="a" style="left:554px;top:484px;width:1px;height:14px;background:#000"></div>
<div class="a" style="left:530px;top:505px;width:37px;height:2px;background:#e8141c"></div>
<div class="t" style="left:482px;top:512px;letter-spacing:-0.3px">Flýtilykill</div>
<div class="a" style="left:532px;top:508px;width:66px;height:20px;background:#fff;border:1px solid #e3e3e3;border-left-color:#a0a0a0;border-top-color:#a0a0a0"></div>
<div class="a" style="left:580px;top:510px;width:16px;height:16px;background:#f0f0f0;border-right:1px solid #a0a0a0;border-bottom:1px solid #a0a0a0;border-left:1px solid #fff;border-top:1px solid #fff"></div>
<div class="a" style="left:584px;top:516px;width:0;height:0;border-left:4px solid transparent;border-right:4px solid transparent;border-top:4px solid #000"></div>
<div class="t" style="left:536px;top:511px">+</div>
<div class="a" style="left:609px;top:361px;width:1px;height:345px;background:#a0a0a0"></div>
<div class="a" style="left:610px;top:362px;width:1px;height:344px;background:#fff"></div>
<!-- grid -->
<div class="a" style="left:612px;top:364px;width:78px;height:47px;background:#fefee2"></div><div class="a" style="left:611px;top:363px;width:79px;height:48px;overflow:hidden"><svg class="a" style="left:24px;top:1px" width="32" height="32" viewBox="0 0 32 32"><path d="M11 1h8v10h11v8H19v10h-8V19H1v-8h10z" fill="url(#gBlueH)" stroke="#1c5088" stroke-width="1.2" stroke-linejoin="round"/>
<path d="M13 3h4v24h-4z" fill="#2c78c0" opacity=".5"/></svg><div class="a" style="left:0;top:37px;width:79px;text-align:center;font-size:11px;line-height:13px;font-weight:bold;letter-spacing:-0.1px">Add</div></div><div class="a" style="left:691px;top:363px;width:79px;height:48px;overflow:hidden"><svg class="a" style="left:24px;top:1px" width="32" height="32" viewBox="0 0 32 32"><path d="M8 2 L30 6 L24 25 L1 20 Z" fill="url(#gNote)" stroke="#b09030" stroke-width="0.9" stroke-linejoin="round"/>
<path d="M10 7 L27 10 M8.5 11 L25 14 M7 15 L22 18 M5.5 19 L18 21.5" stroke="#6a6a58" stroke-width="0.9"/><circle cx="21" cy="21" r="5" fill="#e8f0f8" stroke="#404850" stroke-width="1.6"/><path d="M24.5 24.5 L29 29" stroke="#8a6020" stroke-width="2.5" stroke-linecap="round"/></svg><div class="a" style="left:0;top:37px;width:79px;text-align:center;font-size:11px;line-height:13px;font-weight:normal;letter-spacing:-0.1px">Sækja sölu</div></div><div class="a" style="left:771px;top:363px;width:79px;height:48px;overflow:hidden"><svg class="a" style="left:24px;top:1px" width="32" height="32" viewBox="0 0 32 32"><path d="M2 10 L8 5 L16 12 L24 5 L30 10 L16 25 Z" fill="url(#gBlueH)" stroke="#1c5088" stroke-width="1.2" stroke-linejoin="round"/></svg><div class="a" style="left:0;top:37px;width:79px;text-align:center;font-size:11px;line-height:13px;font-weight:normal;letter-spacing:-0.1px">Aðgerðir</div></div><div class="a" style="left:611px;top:412px;width:79px;height:48px;overflow:hidden"><svg class="a" style="left:24px;top:1px" width="32" height="32" viewBox="0 0 32 32"><rect x="1.5" y="10" width="28" height="9" rx="1.5" fill="url(#gBlueH)" stroke="#1c5088" stroke-width="1.2"/></svg><div class="a" style="left:0;top:37px;width:79px;text-align:center;font-size:11px;line-height:13px;font-weight:normal;letter-spacing:-0.1px">Lækka</div></div><div class="a" style="left:691px;top:412px;width:79px;height:48px;overflow:hidden"><svg class="a" style="left:24px;top:1px" width="32" height="32" viewBox="0 0 32 32"><g transform="translate(0,4)"><path d="M8 2 L30 6 L24 25 L1 20 Z" fill="url(#gNote)" stroke="#b09030" stroke-width="0.9" stroke-linejoin="round"/>
<path d="M10 7 L27 10 M8.5 11 L25 14 M7 15 L22 18 M5.5 19 L18 21.5" stroke="#6a6a58" stroke-width="0.9"/></g><circle cx="11" cy="5" r="3" fill="#e03030" stroke="#901010" stroke-width=".6"/><path d="M12 7 L15 10" stroke="#707070" stroke-width="1"/></svg><div class="a" style="left:0;top:37px;width:79px;text-align:center;font-size:11px;line-height:13px;font-weight:normal;letter-spacing:-0.1px">Geyma sölu</div></div><div class="a" style="left:771px;top:412px;width:79px;height:48px;overflow:hidden"><svg class="a" style="left:24px;top:1px" width="32" height="32" viewBox="0 0 32 32"><path d="M4 6 L24 4 L30 10 L30 20 L10 22 L4 16 Z" fill="#b8a888" stroke="#6a5a40" stroke-width=".8"/>
<path d="M4 6 L24 4 L30 10 L10 12 Z" fill="#d8ccb0" stroke="#6a5a40" stroke-width=".6"/>
<path d="M13 4.5 L17 4 L22 10.5 L18 11 Z M18 11 L22 10.5 L22 20.5 L18 21 Z" fill="#6a9060"/>
<ellipse cx="8" cy="23" rx="5" ry="2.5" fill="#d8c890" stroke="#807040" stroke-width=".6"/>
<path d="M14 21 h10 v9 h-10 z" fill="url(#gSilver)"/><ellipse cx="19" cy="21" rx="5" ry="2" fill="#e8e8e8" stroke="#707070" stroke-width=".6"/><ellipse cx="19" cy="30" rx="5" ry="2" fill="#909090"/>
<path d="M14 24 h10 M14 27 h10" stroke="#707070" stroke-width=".6"/></svg><div class="a" style="left:0;top:37px;width:79px;text-align:center;font-size:11px;line-height:13px;font-weight:normal;letter-spacing:-0.1px">Peningar</div></div><div class="a" style="left:611px;top:461px;width:79px;height:48px;overflow:hidden"><svg class="a" style="left:24px;top:1px" width="32" height="32" viewBox="0 0 32 32"><g transform="translate(1,1)">
<path d="M19 0 L26 0 L12 30 L5 30 Z" fill="#505860"/>
<ellipse cx="9" cy="8.5" rx="6.5" ry="8" fill="#4a5058"/><ellipse cx="22" cy="21.5" rx="6.5" ry="8" fill="#4a5058"/></g>
<path d="M19 0 L26 0 L12 30 L5 30 Z" fill="url(#gSilver)" stroke="#404850" stroke-width=".8"/>
<ellipse cx="9" cy="8.5" rx="6.5" ry="8" fill="url(#gSilver)" stroke="#404850" stroke-width=".8"/><ellipse cx="9" cy="8.5" rx="2.2" ry="4" fill="#f0f0f0" stroke="#505860" stroke-width=".6"/>
<ellipse cx="22" cy="21.5" rx="6.5" ry="8" fill="url(#gSilver)" stroke="#404850" stroke-width=".8"/><ellipse cx="22" cy="21.5" rx="2.2" ry="4" fill="#f0f0f0" stroke="#505860" stroke-width=".6"/></svg><div class="a" style="left:0;top:37px;width:79px;text-align:center;font-size:11px;line-height:13px;font-weight:normal;letter-spacing:-0.1px">Afsláttur</div></div><div class="a" style="left:691px;top:461px;width:79px;height:48px;overflow:hidden"><svg class="a" style="left:24px;top:1px" width="32" height="32" viewBox="0 0 32 32"><path d="M8 2 L30 6 L24 25 L1 20 Z" fill="url(#gNote)" stroke="#b09030" stroke-width="0.9" stroke-linejoin="round"/>
<path d="M10 7 L27 10 M8.5 11 L25 14 M7 15 L22 18 M5.5 19 L18 21.5" stroke="#6a6a58" stroke-width="0.9"/><path d="M17 18 L27 28 M27 18 L17 28" stroke="#d01818" stroke-width="3.2" stroke-linecap="round"/></svg><div class="a" style="left:0;top:37px;width:79px;text-align:center;font-size:11px;line-height:13px;font-weight:normal;letter-spacing:-0.1px">Hreinsa sölu</div></div><div class="a" style="left:771px;top:461px;width:79px;height:48px;overflow:hidden"><svg class="a" style="left:24px;top:1px" width="32" height="32" viewBox="0 0 32 32"><path d="M10 13 L29 8 C30.5 7.6 31 8 31.3 9.5 L32 19 C32 20.5 31.5 21 30 21.4 L12 27 C10.5 27.4 10 27 9.6 25.6 Z" fill="#5a90d0" stroke="#1a4070" stroke-width=".9"/>
<path d="M11 22 L31 16.5" stroke="#c8e0f8" stroke-width="1"/>
<path d="M2 7.5 L24 2 C25.5 1.6 26 2 26.3 3.4 L28 15 C28.2 16.4 27.8 17 26.5 17.3 L5 22.5 C3.6 22.8 3 22.4 2.8 21 L1 9.5 C0.8 8.2 1 7.8 2 7.5 Z" fill="url(#gGold)" stroke="#a07820" stroke-width=".9"/>
<path d="M5 8 L15 5.5" stroke="#d05030" stroke-width="1.3"/><path d="M5 11 L20 7" stroke="#f0d890" stroke-width=".8"/>
<circle cx="19" cy="13.5" r="1.8" fill="#e04030"/></svg><div class="a" style="left:0;top:37px;width:79px;text-align:center;font-size:11px;line-height:13px;font-weight:normal;letter-spacing:-0.1px">Kort</div></div><div class="a" style="left:611px;top:510px;width:79px;height:48px;overflow:hidden"><svg class="a" style="left:24px;top:1px" width="32" height="32" viewBox="0 0 32 32"><path d="M2 8 L8 2 L16 10 L24 2 L30 8 L22 16 L30 24 L24 30 L16 22 L8 30 L2 24 L10 16 Z" fill="url(#gRed)" stroke="#8a0a0a" stroke-width="1" stroke-linejoin="round"/></svg><div class="a" style="left:0;top:37px;width:79px;text-align:center;font-size:11px;line-height:13px;font-weight:normal;letter-spacing:-0.1px">Eyða</div></div><div class="a" style="left:691px;top:510px;width:79px;height:48px;overflow:hidden"><svg class="a" style="left:24px;top:1px" width="32" height="32" viewBox="0 0 32 32"><path d="M3 31 C3 22 7 17 13 16 L20 16 C25 17 27 22 27 31 Z" fill="#1c4a98" stroke="#0c2a60" stroke-width=".8"/>
<path d="M6 24 C8 20 10 19 13 17 M22 18 C24 20 25 23 25 27" stroke="#4a7ad0" stroke-width="1.2" fill="none"/>
<path d="M13 16 L16 29 L20 16 Z" fill="#fff"/><path d="M15.5 18 L17 30 L19 18 Z" fill="#d02020"/>
<path d="M10 8 C10 2 15 0 18 1 C22 2 23 5 22 10 C22 15 19 17 16 17 C12 17 10 13 10 8Z" fill="#f0c888" stroke="#a87840" stroke-width=".6"/>
<path d="M9 9 C8 3 12 0 17 0 C21 0 24 3 23 7 C21 5 17 4 13 5 C12 7 12 9 11 12 Z" fill="#3a4048"/></svg><div class="a" style="left:0;top:37px;width:79px;text-align:center;font-size:11px;line-height:13px;font-weight:normal;letter-spacing:-0.1px">Skuldunautur</div></div><div class="a" style="left:771px;top:510px;width:79px;height:48px;overflow:hidden"><svg class="a" style="left:24px;top:1px" width="32" height="32" viewBox="0 0 32 32"><path d="M5 1 H21 L28 8 V31 H5 Z" fill="url(#gPage)" stroke="#8a9098" stroke-width="1"/>
<path d="M21 1 V8 H28" fill="#e8ecf0" stroke="#8a9098" stroke-width="1"/>
<path d="M9 7h9 M9 10h14 M9 13h15 M9 16h15 M9 19h15 M9 22h15 M9 25h11" stroke="#b0b4b8" stroke-width=".8"/></svg><div class="a" style="left:0;top:37px;width:79px;text-align:center;font-size:11px;line-height:13px;font-weight:normal;letter-spacing:-0.1px">F12 - Í reikning</div></div><div class="a" style="left:611px;top:559px;width:79px;height:48px;overflow:hidden"><svg class="a" style="left:24px;top:1px" width="32" height="32" viewBox="0 0 32 32"><path d="M7 4 L11 1 L24 1 L24 13 L20 17 L7 17 Z" fill="#2a78d0" stroke="#104890" stroke-width=".7"/>
<path d="M7 4 L20 4 L20 17 L7 17 Z" fill="#6ab8f0" stroke="#104890" stroke-width=".7"/>
<path d="M20 4 L24 1 L24 13 L20 17 Z" fill="#2a70c0"/>
<path d="M1 15 L4 13 L17 13 L17 26 L13 29 L1 29 Z" fill="#c8b020" stroke="#807010" stroke-width=".7"/>
<path d="M1 16 L14 16 L14 29 L1 29 Z" fill="#f8ec60" stroke="#807010" stroke-width=".7"/>
<path d="M14 16 L17 13 L30 13 L30 26 L27 29 L14 29 Z" fill="url(#gGreen)" stroke="#2a7010" stroke-width=".7"/>
<path d="M27 16 L30 13 L30 26 L27 29 Z" fill="#3a9020"/></svg><div class="a" style="left:0;top:37px;width:79px;text-align:center;font-size:11px;line-height:13px;font-weight:normal;letter-spacing:-0.1px">Vörur</div></div><div class="a" style="left:691px;top:559px;width:79px;height:48px;overflow:hidden"><svg class="a" style="left:24px;top:1px" width="32" height="32" viewBox="0 0 32 32"><path d="M1 22 L27 20 L31 25 L31 28 L5 31 L1 27 Z" fill="#7a5a30" stroke="#4a3018" stroke-width=".8"/>
<path d="M1 22 L27 20 L31 25 L5 27 Z" fill="#b89060"/>
<path d="M4 22 L4 9 C4 5 6 3 10 3 L23 3 C26 3 28 5 28 8 L28 21 Z" fill="url(#gSilver)" stroke="#404850" stroke-width=".8"/>
<path d="M6 8 C6 6 8 5 10 5 L24 5" stroke="#f4f4f4" stroke-width="1" fill="none"/>
<rect x="10" y="1" width="13" height="5" rx="1" fill="#505860" stroke="#303840" stroke-width=".5"/><rect x="11.5" y="2" width="10" height="2.5" fill="#40d050"/>
<path d="M9 9 V19 M13 9 V19 M17 9 V19 M21 9 V19" stroke="#f8f8f8" stroke-width="1.8"/>
<path d="M10.2 9 V19 M14.2 9 V19 M18.2 9 V19 M22.2 9 V19" stroke="#606870" stroke-width=".6"/>
<path d="M27 10 L31 9 L31 14 L27 15 Z" fill="#b0b8c0" stroke="#505860" stroke-width=".5"/>
<circle cx="10" cy="15" r="1.2" fill="#d02020"/><circle cx="14" cy="16" r="1.2" fill="#d02020"/><circle cx="18" cy="15" r="1.2" fill="#d02020"/></svg><div class="a" style="left:0;top:37px;width:79px;text-align:center;font-size:11px;line-height:13px;font-weight:normal;letter-spacing:-0.1px">Skúffa</div></div><div class="a" style="left:771px;top:559px;width:79px;height:48px;overflow:hidden"><svg class="a" style="left:24px;top:1px" width="32" height="32" viewBox="0 0 32 32"><path d="M15 12 L27 15 L29 31 L17 29 Z" fill="#c0c8a0" stroke="#707860" stroke-width=".7"/>
<path d="M17 16 L26 18 M17.5 21 L26.5 23 M18 26 L27 27.5" stroke="#8a9870" stroke-width="1"/>
<path d="M4 4 C10 3 16 5 19 10 L22 16 C23 20 22 24 19 24 C16 24 14 22 12 20 L9 16 C7 13 5 10 4 8 Z" fill="#e8b080" stroke="#905830" stroke-width=".8"/>
<path d="M13 13 L20 19 M15 11 L21 15" stroke="#b07848" stroke-width=".7"/>
<path d="M1 1 L10 0 L11 5 L3 8 Z" fill="#181818"/></svg><div class="a" style="left:0;top:37px;width:79px;text-align:center;font-size:11px;line-height:13px;font-weight:normal;letter-spacing:-0.1px">Borga</div></div><div class="a" style="left:611px;top:608px;width:79px;height:48px;overflow:hidden"><svg class="a" style="left:24px;top:1px" width="32" height="32" viewBox="0 0 32 32"><path d="M5 1 H21 L28 8 V31 H5 Z" fill="url(#gPage)" stroke="#8a9098" stroke-width="1"/>
<path d="M21 1 V8 H28" fill="#e8ecf0" stroke="#8a9098" stroke-width="1"/>
<path d="M8 5h11 M8 8h12 M8 11h16 M8 14h16 M8 17h16 M8 20h16 M8 23h16 M8 26h12" stroke="#707070" stroke-width=".9" stroke-dasharray="1.5 .6"/></svg><div class="a" style="left:0;top:37px;width:79px;text-align:center;font-size:11px;line-height:13px;font-weight:normal;letter-spacing:-0.1px">Texti</div></div><div class="a" style="left:691px;top:608px;width:79px;height:48px;overflow:hidden"><svg class="a" style="left:24px;top:1px" width="32" height="32" viewBox="0 0 32 32"><path d="M6 1 H23 L28 6 V31 H6 Z" fill="#fbfcfe" stroke="#9098a0" stroke-width="1"/>
<path d="M23 1 V6 H28" fill="#e0e4e8" stroke="#9098a0" stroke-width=".8"/>
<path d="M7 6h20 M7 9.5h20 M7 13h20 M7 16.5h20 M7 20h20 M7 23.5h20 M7 27h20" stroke="#a8c0e0" stroke-width=".8"/>
<path d="M10 2 V30" stroke="#e89090" stroke-width=".8"/>
<circle cx="8" cy="8" r=".9" fill="#606060"/><circle cx="8" cy="16" r=".9" fill="#606060"/><circle cx="8" cy="24" r=".9" fill="#606060"/></svg><div class="a" style="left:0;top:31px;width:79px;text-align:center;font-size:11px;line-height:13px;font-weight:normal;letter-spacing:-0.1px">Minnisbók<br>bakkanda</div></div><div class="a" style="left:771px;top:608px;width:79px;height:48px;overflow:hidden"><svg class="a" style="left:24px;top:1px" width="32" height="32" viewBox="0 0 32 32"><path d="M6 1 H23 L28 6 V31 H6 Z" fill="#fbfcfe" stroke="#9098a0" stroke-width="1"/>
<path d="M23 1 V6 H28" fill="#e0e4e8" stroke="#9098a0" stroke-width=".8"/>
<path d="M7 6h20 M7 9.5h20 M7 13h20 M7 16.5h20 M7 20h20 M7 23.5h20 M7 27h20" stroke="#a8c0e0" stroke-width=".8"/>
<path d="M10 2 V30" stroke="#e89090" stroke-width=".8"/>
<circle cx="8" cy="8" r=".9" fill="#606060"/><circle cx="8" cy="16" r=".9" fill="#606060"/><circle cx="8" cy="24" r=".9" fill="#606060"/></svg><div class="a" style="left:0;top:37px;width:79px;text-align:center;font-size:11px;line-height:13px;font-weight:normal;letter-spacing:-0.1px">Tilvísun</div></div><div class="a" style="left:611px;top:657px;width:79px;height:48px;overflow:hidden"><svg class="a" style="left:24px;top:1px" width="32" height="32" viewBox="0 0 32 32"><path d="M6 1 H23 L28 6 V31 H6 Z" fill="#fbfcfe" stroke="#9098a0" stroke-width="1"/>
<path d="M23 1 V6 H28" fill="#e0e4e8" stroke="#9098a0" stroke-width=".8"/>
<path d="M7 6h20 M7 9.5h20 M7 13h20 M7 16.5h20 M7 20h20 M7 23.5h20 M7 27h20" stroke="#a8c0e0" stroke-width=".8"/>
<path d="M10 2 V30" stroke="#e89090" stroke-width=".8"/>
<circle cx="8" cy="8" r=".9" fill="#606060"/><circle cx="8" cy="16" r=".9" fill="#606060"/><circle cx="8" cy="24" r=".9" fill="#606060"/></svg><div class="a" style="left:0;top:37px;width:79px;text-align:center;font-size:11px;line-height:13px;font-weight:normal;letter-spacing:-0.1px">Beiðni</div></div><div class="a" style="left:691px;top:657px;width:79px;height:48px;overflow:hidden"><svg class="a" style="left:24px;top:1px" width="32" height="32" viewBox="0 0 32 32"><path d="M6 4 C6 2 8 1 10 1 L27 1 C29 1 30 2 30 4 L30 15 C30 17 29 18 27 18 L9 18 C7 18 5 17 5 15 Z" fill="#f4f8fc" stroke="#606870" stroke-width=".8"/>
<path d="M6 4 C6 2 8 1 10 1 L27 1 C29 1 30 2 30 4 L30 8 L6 9 Z" fill="#5aa8e8" stroke="#306090" stroke-width=".7"/>
<path d="M11 5 L22 4.5 L22 7 L11 7.5 Z" fill="#284868"/>
<path d="M27 1 L30 0 L30 6 L28 6Z" fill="#505860"/>
<path d="M1 19 L12 11 L20 13 L8 22 Z" fill="#f8fafc" stroke="#606870" stroke-width=".8"/>
<path d="M9 12 L24 12" stroke="#303840" stroke-width="1.2"/></svg><div class="a" style="left:0;top:31px;width:79px;text-align:center;font-size:11px;line-height:13px;font-weight:normal;letter-spacing:-0.1px">Endurprenta<br>síðustu sölu</div></div><div class="a" style="left:771px;top:657px;width:79px;height:48px;overflow:hidden"><svg class="a" style="left:24px;top:1px" width="32" height="32" viewBox="0 0 32 32"><g transform="translate(1,2)"><path d="M8 2 L30 6 L24 25 L1 20 Z" fill="url(#gNote)" stroke="#b09030" stroke-width="0.9" stroke-linejoin="round"/>
<path d="M10 7 L27 10 M8.5 11 L25 14 M7 15 L22 18 M5.5 19 L18 21.5" stroke="#6a6a58" stroke-width="0.9"/></g><path d="M18 28 L28 17 L31 20 L21 31 L17 31 Z" fill="#f0c040" stroke="#906010" stroke-width=".8"/><path d="M28 17 L30 15 L32 18 L31 20 Z" fill="#e04050"/></svg><div class="a" style="left:0;top:37px;width:79px;text-align:center;font-size:11px;line-height:13px;font-weight:normal;letter-spacing:-0.1px">Heimalán</div></div><div class="a" style="left:690px;top:363px;width:1px;height:343px;background:#a0a0a0"></div><div class="a" style="left:770px;top:363px;width:1px;height:343px;background:#a0a0a0"></div><div class="a" style="left:850px;top:363px;width:1px;height:343px;background:#a0a0a0"></div><div class="a" style="left:611px;top:411px;width:240px;height:1px;background:#a0a0a0"></div><div class="a" style="left:611px;top:460px;width:240px;height:1px;background:#a0a0a0"></div><div class="a" style="left:611px;top:509px;width:240px;height:1px;background:#a0a0a0"></div><div class="a" style="left:611px;top:558px;width:240px;height:1px;background:#a0a0a0"></div><div class="a" style="left:611px;top:607px;width:240px;height:1px;background:#a0a0a0"></div><div class="a" style="left:611px;top:656px;width:240px;height:1px;background:#a0a0a0"></div><div class="a" style="left:611px;top:705px;width:240px;height:1px;background:#a0a0a0"></div><div class="a" style="left:625px;top:416px;width:45px;height:2px;background:#e8141c"></div>
<!-- right -->
<div class="a" style="left:851px;top:361px;width:1px;height:345px;background:#a0a0a0"></div>
<div class="a" style="left:852px;top:362px;width:1px;height:344px;background:#fff"></div>
<div class="a" style="left:856px;top:366px;width:152px;height:337px;background:#fff;border:1px solid #f8f8f8;border-left-color:#a0a0a0;border-top-color:#a0a0a0"></div>
<div class="t" style="left:883px;top:374px">Tengjast</div>
<div class="t" style="left:883px;top:399px">Fjarþjónusta</div>
<div class="t" style="left:883px;top:424px">Vöruskil</div>
<svg class="a" style="left:858px;top:368px" width="24" height="24" viewBox="0 0 32 32"><circle cx="16" cy="16" r="14.5" fill="url(#gGlobe)" stroke="#1a4a80" stroke-width=".6"/>
<path d="M8 6 C12 4 16 6 15 10 C14 13 10 12 9 16 C8 19 5 18 3 14 C3 10 5 8 8 6Z" fill="#5ab040"/>
<path d="M18 14 C22 12 27 14 28 18 C28 23 24 27 20 28 C19 24 21 22 19 19 C17 17 17 15 18 14Z" fill="#5ab040"/>
<path d="M20 4 C23 4 26 6 27 9 C24 9 22 7 20 4Z" fill="#5ab040"/></svg><svg class="a" style="left:858px;top:393px" width="24" height="24" viewBox="0 0 32 32"><g transform="translate(1,1) scale(0.95)"><rect x="0" y="0" width="14" height="11" rx="1" fill="#d0d4d8" stroke="#606870" stroke-width=".8"/>
<rect x="1.5" y="1.5" width="11" height="8" fill="url(#gScreen)"/>
<path d="M4 11 L10 11 L12 14 L2 14 Z" fill="#b0b4b8" stroke="#707880" stroke-width=".6"/></g><path d="M7 16 C2 18 2 26 8 27 L18 27" fill="none" stroke="#303030" stroke-width="1.6"/><g transform="translate(13,12) scale(1.05)"><rect x="0" y="0" width="14" height="11" rx="1" fill="#d0d4d8" stroke="#606870" stroke-width=".8"/>
<rect x="1.5" y="1.5" width="11" height="8" fill="url(#gScreen)"/>
<path d="M4 11 L10 11 L12 14 L2 14 Z" fill="#b0b4b8" stroke="#707880" stroke-width=".6"/></g></svg><svg class="a" style="left:858px;top:418px" width="24" height="24" viewBox="0 0 32 32"><path d="M3 26 L6 12 L10 16 C14 8 22 6 28 12 C31 15 30 20 28 22 C26 17 20 14 14 20 L18 24 Z" fill="url(#gBlue)" stroke="#1a5a98" stroke-width=".9" stroke-linejoin="round"/></svg>
<div class="a" style="left:196px;top:706px;width:815px;height:1px;background:#a0a0a0"></div>
<div class="a" style="left:196px;top:707px;width:815px;height:1px;background:#fff"></div>
<!-- bottom buttons -->
<div class="a" style="left:815px;top:713px;width:90px;height:22px;background:#f0f0f0;border:1px solid #a0a0a0;border-left-color:#fff;border-top-color:#fff"></div>
<div class="t" style="left:837px;top:717px;letter-spacing:0.3px"><span style="letter-spacing:1px">F12</span>&nbsp;Skrá</div>
<div class="a" style="left:911px;top:713px;width:90px;height:22px;background:#f0f0f0;border:1px solid #a0a0a0;border-left-color:#fff;border-top-color:#fff"></div>
<div class="t" style="left:919px;top:717px">ESC&nbsp; Hætta við</div>
<div class="a" style="left:816px;top:736px;width:89px;height:2px;background:#e8141c"></div>

</body></html>
